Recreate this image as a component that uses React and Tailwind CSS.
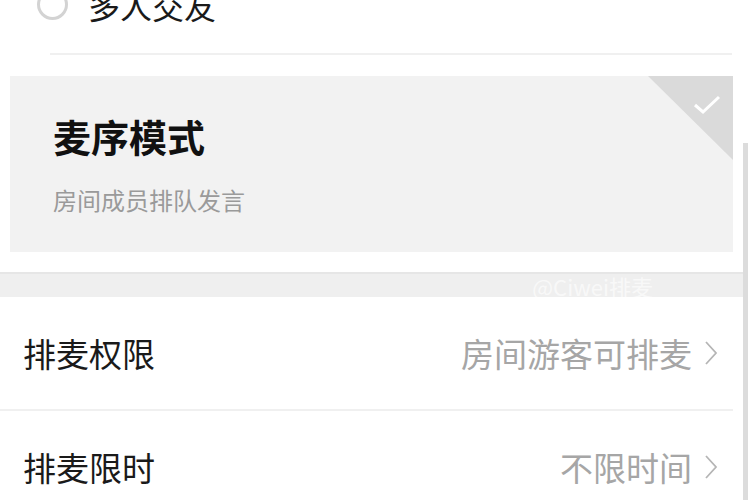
import React from "react";

function Chevron() {
  return (
    <svg width="14" height="26" viewBox="0 0 14 26" className="ml-[12px]">
      <path d="M2 2 L12 13 L2 24" fill="none" stroke="#b5b5b5" strokeWidth="1.8" />
    </svg>
  );
}

export default function App() {
  return (
    <div className="relative w-[750px] h-[500px] overflow-hidden bg-white font-['Noto_Sans_CJK_SC',sans-serif]">
      <div className="-mt-[44px] h-[97px] pl-[37px] flex items-center gap-[20px]">
        <div className="w-[31px] h-[31px] rounded-full border-[3px] border-[#d3d3d3]" />
        <span className="text-[32px] leading-none text-[#1a1a1a]">多人交友</span>
      </div>
      <div className="ml-[50px] mr-[18px] h-[2px] bg-[#f0f0f0]" />
      <div className="mt-[21px] ml-[10px] w-[723px] h-[176px] bg-[#f2f2f2] relative pl-[43px] pt-[41px]">
        <div className="text-[38px] leading-none font-bold text-[#111]">麦序模式</div>
        <div className="mt-[33px] text-[24px] leading-none text-[#9a9a9a]">房间成员排队发言</div>
        <div className="absolute top-0 right-0 w-[85px] h-[84px] bg-[#dadada] [clip-path:polygon(0_0,100%_0,100%_100%)]" />
        <svg className="absolute top-[18px] right-[12px]" width="28" height="22" viewBox="0 0 28 22">
          <path d="M2 11 L10 18 L26 3" fill="none" stroke="#ffffff" strokeWidth="3" />
        </svg>
      </div>
      <div className="mt-[20px] w-[743px] h-[25px] bg-[#efefef] border-t-2 border-[#e6e6e6] flex items-center justify-end pr-[90px]">
        <span className="text-[22px] leading-none text-white opacity-60">@Ciwei排麦</span>
      </div>
      <div className="w-[733px] h-[114px] flex items-center justify-between pl-[23px] pr-[15px] border-b-2 border-[#f0f0f0]">
        <span className="text-[33px] leading-none text-[#1a1a1a]">排麦权限</span>
        <div className="flex items-center">
          <span className="text-[33px] leading-none text-[#a6a6a6]">房间游客可排麦</span>
          <Chevron />
        </div>
      </div>
      <div className="w-[733px] h-[112px] flex items-center justify-between pl-[23px] pr-[15px]">
        <span className="text-[33px] leading-none text-[#1a1a1a]">排麦限时</span>
        <div className="flex items-center">
          <span className="text-[33px] leading-none text-[#a6a6a6]">不限时间</span>
          <Chevron />
        </div>
      </div>
      <div className="absolute right-[2px] top-[143px] w-[5px] h-[357px] bg-[#dcdcdc]" />
    </div>
  );
}
